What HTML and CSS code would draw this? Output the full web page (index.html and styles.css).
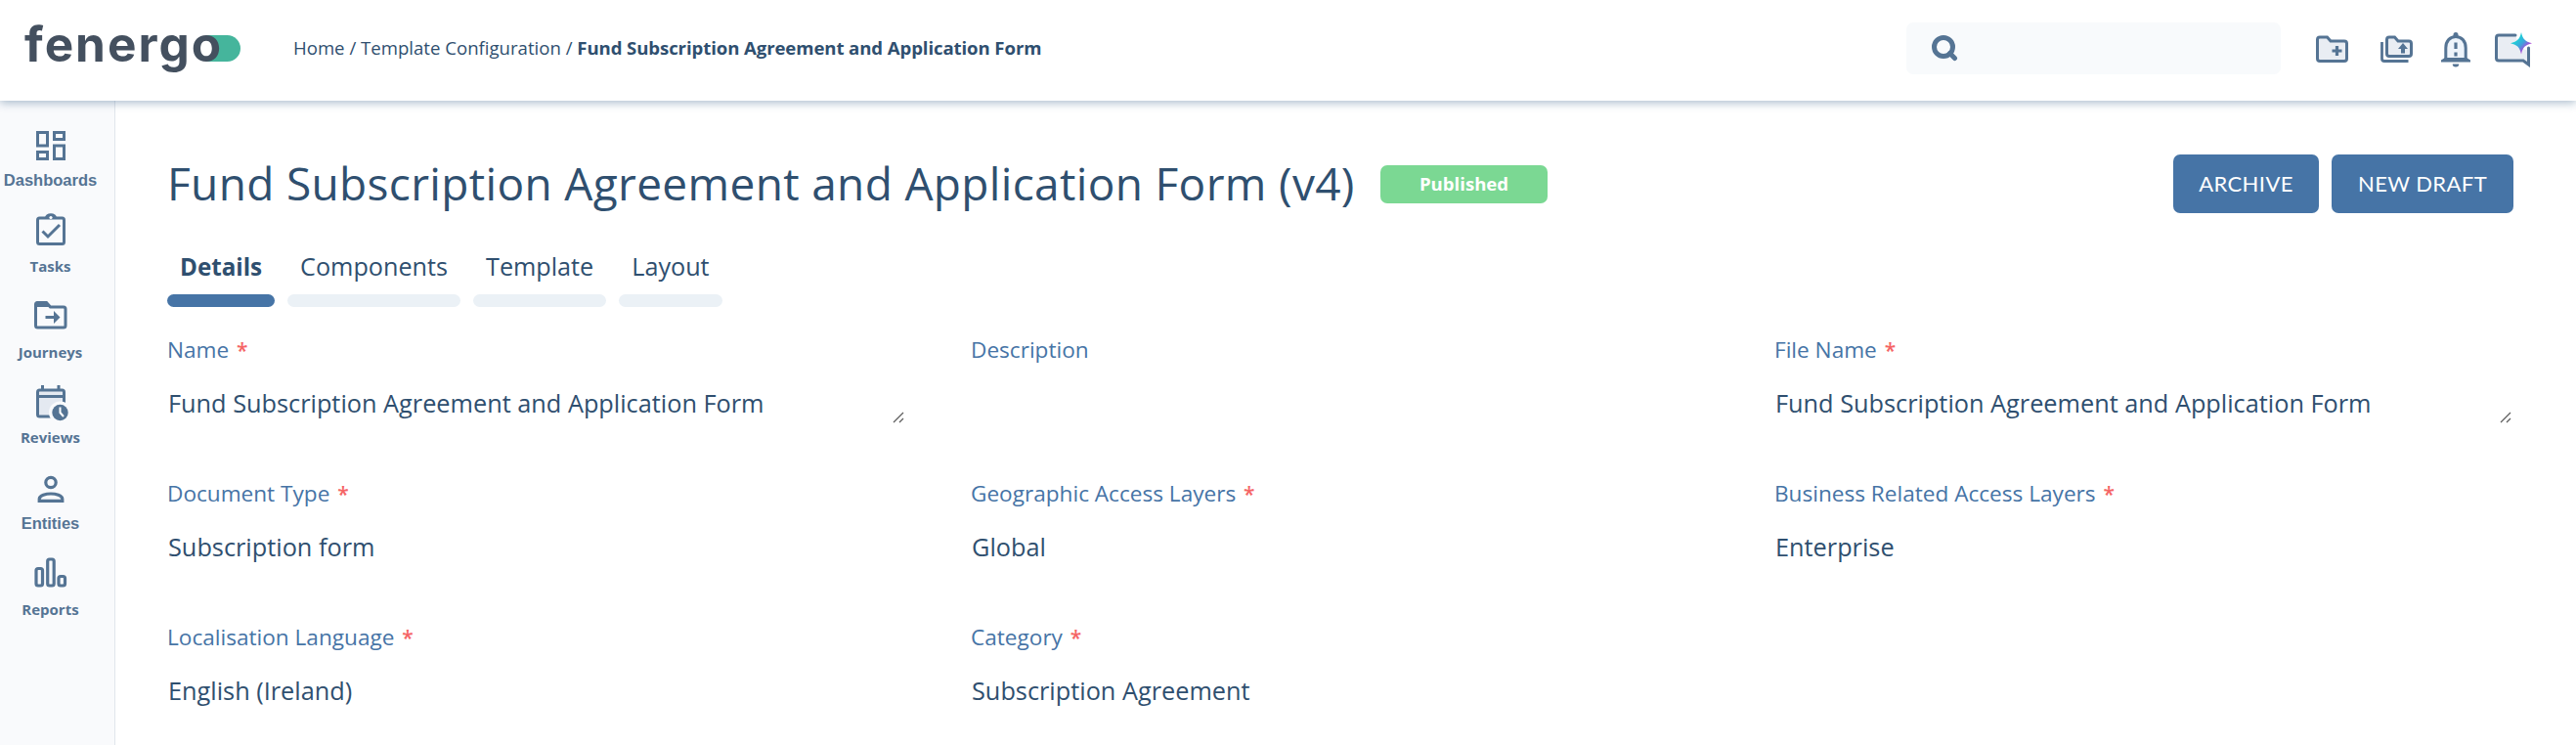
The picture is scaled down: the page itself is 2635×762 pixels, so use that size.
FILE: index.html
```html
<!DOCTYPE html>
<html lang="en">
<head>
  <meta charset="UTF-8">
  <meta name="viewport" content="width=device-width, initial-scale=1.0">
  <title>Fund Subscription Agreement and Application Form</title>
  <link rel="stylesheet" href="styles.css">
</head>
<body>
  <header class="header">
    <div class="logo">
      <svg class="logo-pill" width="38" height="27" viewBox="0 0 38 27">
        <path d="M3 0h21.500a13.500 13.500 0 0 1 0 27H3z" fill="#45b59c"/>
        <circle cx="3" cy="13.500" r="10" fill="#fff"/>
      </svg>
      <span class="logo-text">fenergo</span>
    </div>
    <nav class="breadcrumb">
      <a>Home</a> / <a>Template Configuration</a> / <b>Fund Subscription Agreement and Application Form</b>
    </nav>
    <div class="search">
      <svg width="28" height="28" viewBox="0 0 28 28" fill="none" stroke="#557494">
        <circle cx="13" cy="12" r="9.500" stroke-width="5"/>
        <path d="M19.500 18.500l5 5" stroke-width="5" stroke-linecap="round"/>
      </svg>
    </div>
    <div class="header-icons">
      <svg class="icon-folder" width="33" height="40" viewBox="0 0 33 40">
        <path d="M4 8h7.500l3.500 4H29a2.500 2.500 0 0 1 2.500 2.500v15.500A2.500 2.500 0 0 1 29 32.500H4a2.500 2.500 0 0 1-2.500-2.500V10.500A2.500 2.500 0 0 1 4 8z" fill="#e9edf3" stroke="#557494" stroke-width="3"/>
        <path d="M21.500 17v10M16.500 22h10" fill="none" stroke="#557494" stroke-width="3.200"/>
      </svg>
      <svg class="icon-stack" width="33" height="40" viewBox="0 0 33 40">
        <path d="M1.500 13v17A2.500 2.500 0 0 0 4 32.500h24.500" fill="none" stroke="#557494" stroke-width="2.800"/>
        <path d="M9 8h5.500l3.500 4H29a2.500 2.500 0 0 1 2.500 2.500v10.500A2.500 2.500 0 0 1 29 27.500H9a2.500 2.500 0 0 1-2.500-2.500V10.500A2.500 2.500 0 0 1 9 8z" fill="#e9edf3" stroke="#557494" stroke-width="3"/>
        <path d="M23 14l5 6h-3v4.500h-4v-4.500h-3z" fill="#557494"/>
      </svg>
      <svg class="icon-bell" width="30" height="40" viewBox="0 0 30 40">
        <path d="M4.800 31V19c0-7 4.200-11.500 10.200-11.500S25.200 12 25.200 19v12z" fill="#eef4fb" stroke="#557494" stroke-width="3"/>
        <path d="M12.500 8V5.500a2.500 2.500 0 0 1 5 0V8zM0 33.500v-2l4-2.500h22l4 2.500v2zM11.700 35.500h6.600a3.300 3 0 0 1-6.600 0z" fill="#557494"/>
        <path d="M15 13.500v6.500M15 23.500v4" fill="none" stroke="#557494" stroke-width="3.200"/>
      </svg>
      <svg class="icon-chat" width="38" height="40" viewBox="0 0 38 40">
        <defs>
          <linearGradient id="spark" x1="0.250" y1="0.250" x2="0.800" y2="0.800">
            <stop offset="0.150" stop-color="#20cbd8"/>
            <stop offset="0.500" stop-color="#3fa3dc"/>
            <stop offset="0.800" stop-color="#9a55d8"/>
            <stop offset="1" stop-color="#c531cf"/>
          </linearGradient>
        </defs>
        <path d="M4 6h17l5 13 8.500 3v12l-5-2H4a2.500 2.500 0 0 1-2.500-2.500V8.500A2.500 2.500 0 0 1 4 6z" fill="#e9edf3"/>
        <path d="M21 6H4a2.500 2.500 0 0 0-2.500 2.500v21A2.500 2.500 0 0 0 4 32h25l5.500 4V19" fill="none" stroke="#557494" stroke-width="3" stroke-linecap="round"/>
        <path d="M27 3c1.500 7 4 9.500 11 11.200-7 1.600-9.500 4.200-11 11.200-1.500-7-4-9.600-11-11.200C23 12.500 25.500 10 27 3z" fill="url(#spark)"/>
      </svg>
    </div>
  </header>

  <div class="page">
    <aside class="sidebar">
      <a class="nav-item alt">
        <svg width="40" height="44" viewBox="0 0 40 44" fill="none" stroke="#557494" stroke-width="3">
          <path d="M6.500 8.500h10v13.500h-10zM23.500 8.500h10V15.500h-10zM6.500 28.500h10v7h-10zM23.500 22h10v13.500h-10z"/>
        </svg>
        <span>Dashboards</span>
      </a>
      <a class="nav-item">
        <svg width="40" height="44" viewBox="0 0 40 44" fill="none" stroke="#557494" stroke-width="3">
          <rect x="6.500" y="8" width="27" height="26.500" rx="2"/>
          <path d="M11.500 21.500l5.500 5.500 12-12"/>
          <path d="M14 8a6 4.800 0 0 1 12 0z" fill="#557494" stroke="none"/>
          <circle cx="20" cy="7.500" r="1.600" fill="#fff" stroke="none"/>
        </svg>
        <span>Tasks</span>
      </a>
      <a class="nav-item">
        <svg width="40" height="44" viewBox="0 0 40 44">
          <path d="M6 6.500h9.500l4 4.500H33a2 2 0 0 1 2 2v17a2 2 0 0 1-2 2H6.500a2 2 0 0 1-2-2V8.500a2 2 0 0 1 1.500-2z" fill="none" stroke="#557494" stroke-width="3"/>
          <path d="M5 6h10l4 5H5z" fill="#557494"/>
          <path d="M14.500 20h8.500v-5l6.500 6.500-6.500 6.500v-5h-8.500z" fill="#557494"/>
        </svg>
        <span>Journeys</span>
      </a>
      <a class="nav-item">
        <svg width="40" height="44" viewBox="0 0 40 44">
          <rect x="6.500" y="9" width="27" height="27" rx="2" fill="#e4e9f1" stroke="#557494" stroke-width="3"/>
          <path d="M6 15.500h28M11.500 4v5M28 4v5" stroke="#557494" stroke-width="3"/>
          <circle cx="29.500" cy="32" r="11.500" fill="#f9fafc"/>
          <circle cx="29.500" cy="32" r="8.200" fill="#557494"/>
          <path d="M29.500 26.500v5.500l3.500 4" fill="none" stroke="#fff" stroke-width="2"/>
        </svg>
        <span>Reviews</span>
      </a>
      <a class="nav-item alt">
        <svg width="40" height="44" viewBox="0 0 40 44" fill="none" stroke="#557494" stroke-width="3.200">
          <circle cx="20" cy="15.500" r="5.200"/>
          <path d="M8.200 34.400h23.600v-1.900c0-3.800-7-5.500-11.800-5.500s-11.800 1.700-11.800 5.500z"/>
        </svg>
        <span>Entities</span>
      </a>
      <a class="nav-item">
        <svg width="40" height="44" viewBox="0 0 40 44" fill="none" stroke="#557494" stroke-width="3.200">
          <rect x="5" y="15.500" width="6.500" height="17.500" rx="2"/>
          <rect x="16.700" y="6" width="6.500" height="27" rx="2"/>
          <rect x="28" y="23.500" width="6.500" height="9.500" rx="2"/>
        </svg>
        <span>Reports</span>
      </a>
    </aside>

    <main class="content">
      <div class="title-row">
        <h1>Fund Subscription Agreement and Application Form (v4)</h1>
        <span class="badge">Published</span>
        <div class="actions">
          <button>ARCHIVE</button>
          <button>NEW DRAFT</button>
        </div>
      </div>

      <div class="tabs">
        <a class="tab active">Details</a>
        <a class="tab">Components</a>
        <a class="tab">Template</a>
        <a class="tab">Layout</a>
      </div>

      <div class="fields">
        <div class="field">
          <label>Name <i>*</i></label>
          <div class="value">Fund Subscription Agreement and Application Form
            <svg class="resizer" width="12" height="12" viewBox="0 0 12 12"><path d="M1 11L11 1M7 11l4-4" stroke="#5f5f5f" stroke-width="1.300"/></svg>
          </div>
        </div>
        <div class="field">
          <label>Description</label>
        </div>
        <div class="field">
          <label>File Name <i>*</i></label>
          <div class="value">Fund Subscription Agreement and Application Form
            <svg class="resizer" width="12" height="12" viewBox="0 0 12 12"><path d="M1 11L11 1M7 11l4-4" stroke="#5f5f5f" stroke-width="1.300"/></svg>
          </div>
        </div>
        <div class="field">
          <label>Document Type <i>*</i></label>
          <div class="value">Subscription form</div>
        </div>
        <div class="field">
          <label>Geographic Access Layers <i>*</i></label>
          <div class="value">Global</div>
        </div>
        <div class="field">
          <label>Business Related Access Layers <i>*</i></label>
          <div class="value">Enterprise</div>
        </div>
        <div class="field">
          <label>Localisation Language <i>*</i></label>
          <div class="value">English (Ireland)</div>
        </div>
        <div class="field">
          <label>Category <i>*</i></label>
          <div class="value">Subscription Agreement</div>
        </div>
      </div>
    </main>
  </div>
</body>
</html>
```
FILE: styles.css
```css
* {
  margin: 0;
  padding: 0;
  box-sizing: border-box;
}

body {
  height: 762px;
  overflow: hidden;
  background: #fff;
  color: #2f4f6f;
  font-family: 'Open Sans', sans-serif;
}

svg {
  display: block;
  flex-shrink: 0;
}

/* header */
.header {
  position: relative;
  z-index: 1;
  display: flex;
  align-items: center;
  height: 103px;
  padding: 0 45px 4px 24px;
  background: #fff;
  box-shadow: 0 2px 9px rgba(47, 90, 130, 0.42);
}

.logo {
  position: relative;
  width: 276px;
  height: 53px;
}

.logo-text {
  position: relative;
  display: block;
  padding-left: 1px;
  font: 650 49.5px/44px 'Inter', sans-serif;
  letter-spacing: 2px;
  color: #44505f;
}

.logo-pill {
  position: absolute;
  left: 184px;
  top: 13px;
}

.breadcrumb {
  flex: 1;
  margin-bottom: 2px;
  font-size: 18.6px;
  line-height: 28px;
}

.breadcrumb b {
  letter-spacing: -0.1px;
}

.search {
  display: flex;
  align-items: center;
  width: 383px;
  height: 53px;
  padding-left: 25px;
  border-radius: 7px;
  background: #f8fafc;
}

.header-icons {
  display: flex;
  align-items: center;
  padding-left: 36px;
}

.icon-folder {
  margin-right: 33px;
}

.icon-stack {
  margin-right: 29px;
}

.icon-bell {
  margin-right: 25px;
}

/* sidebar */
.page {
  display: flex;
  height: 659px;
}

.sidebar {
  display: flex;
  flex-direction: column;
  gap: 17.8px;
  width: 118px;
  padding: 24px 14px 0 0;
  border-right: 1px solid #e1e5eb;
  background: #f9fafc;
}

.nav-item {
  display: flex;
  flex-direction: column;
  align-items: center;
  color: #557494;
  font-size: 15px;
  font-weight: 700;
  line-height: 26px;
}

.nav-item.alt {
  font-family: 'Liberation Sans', Arial, sans-serif;
  font-size: 16.5px;
}

/* content */
.content {
  flex: 1;
  padding: 55px 64px 0 53px;
}

.title-row {
  display: flex;
  align-items: center;
  height: 60px;
}

h1 {
  width: 1241px;
  padding-bottom: 2px;
  font-size: 46px;
  font-weight: 400;
  letter-spacing: 0.34px;
  line-height: 58px;
  white-space: nowrap;
}

.badge {
  width: 171px;
  height: 39px;
  border-radius: 7px;
  background: #7bd893;
  color: #fff;
  font-size: 18.6px;
  font-weight: 700;
  line-height: 37px;
  text-align: center;
}

.actions {
  display: flex;
  gap: 13px;
  margin-left: auto;
}

button {
  width: 149px;
  height: 60px;
  padding-bottom: 2px;
  border: none;
  border-radius: 7px;
  background: #4674a6;
  color: #fff;
  font: 400 22px 'Lato', sans-serif;
  letter-spacing: 0.4px;
}

button:last-child {
  width: 186px;
}

.tabs {
  display: flex;
  gap: 13px;
  margin-top: 31px;
}

.tab {
  padding: 0 13px;
  font-size: 25.2px;
  line-height: 47px;
}

.tab::after {
  content: '';
  display: block;
  height: 13px;
  margin: 5px -13px 0;
  border-radius: 6.5px;
  background: #ebf1f6;
}

.tab.active {
  font-size: 24.2px;
  font-weight: 700;
}

.tab.active::after {
  background: #4674a6;
}

.fields {
  display: grid;
  grid-template-columns: repeat(3, 1fr);
  grid-auto-rows: 147px;
  column-gap: 66px;
  margin-top: 27px;
}

.field label {
  display: block;
  color: #4674a6;
  font-size: 22.6px;
  line-height: 34px;
}

.field i {
  margin-left: 2px;
  color: #f56565;
  font-size: 21px;
  font-style: normal;
  font-weight: 600;
}

.value {
  display: flex;
  justify-content: space-between;
  align-items: center;
  height: 43px;
  margin-top: 15px;
  padding: 0 2px 0 1px;
  font-size: 25.3px;
}

.resizer {
  align-self: flex-end;
}
```
